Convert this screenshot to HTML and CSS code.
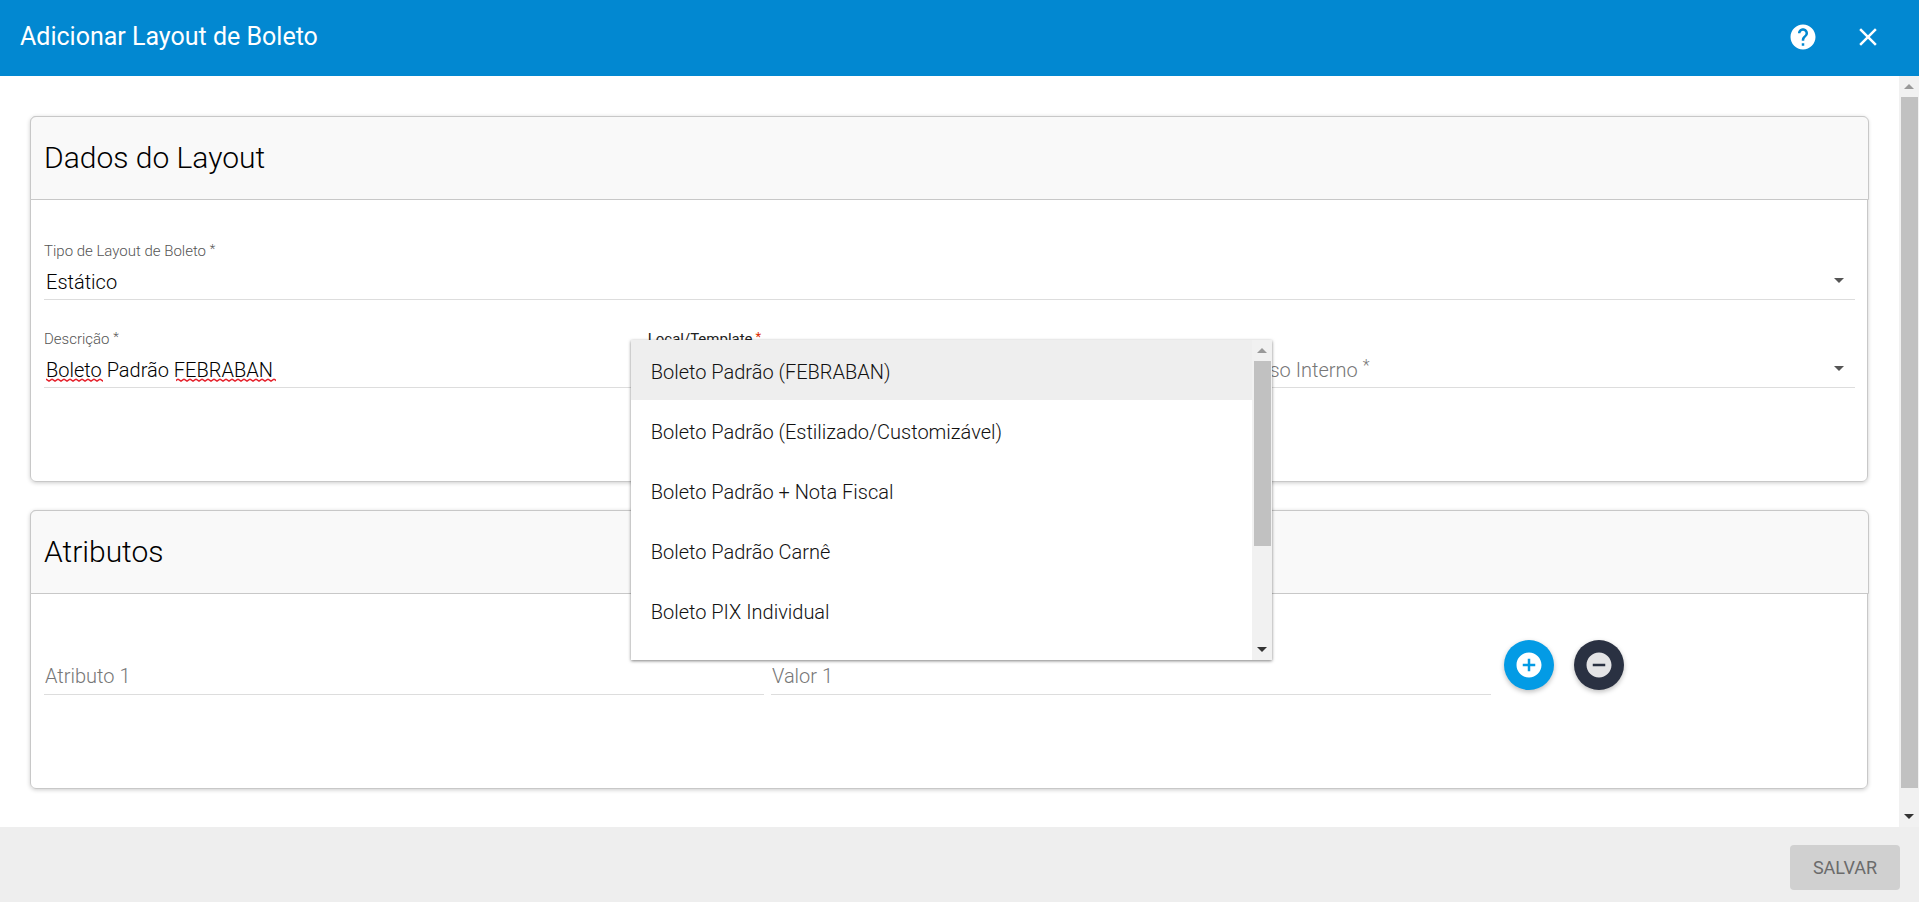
FILE: index.html
```html
<!DOCTYPE html>
<html lang="pt-BR">
<head>
<meta charset="utf-8">
<title>Adicionar Layout de Boleto</title>
<meta name="viewport" content="width=device-width, initial-scale=1">
<link rel="stylesheet" href="styles.css">
</head>
<body>
<form class="dialog">
  <header class="toolbar">
    <h1 class="toolbar-title">Adicionar Layout de Boleto</h1>
    <button class="icon-button" type="button" aria-label="Ajuda">
      <svg class="icon" viewBox="0 0 24 24"><path d="M12 2C6.48 2 2 6.48 2 12s4.480 10 10 10 10-4.480 10-10S17.520 2 12 2zm1 17h-2v-2h2v2zm2.070-7.750l-.9.920C13.450 12.900 13 13.500 13 15h-2v-.5c0-1.100.45-2.100 1.170-2.830l1.240-1.260c.37-.36.59-.86.59-1.410 0-1.100-.9-2-2-2s-2 .9-2 2H8c0-2.210 1.790-4 4-4s4 1.790 4 4c0 .88-.36 1.680-.93 2.250z"/></svg>
    </button>
    <button class="icon-button" type="button" aria-label="Fechar">
      <svg class="icon" viewBox="0 0 24 24"><path d="M19 6.410L17.590 5 12 10.590 6.410 5 5 6.410 10.590 12 5 17.590 6.410 19 12 13.410 17.590 19 19 17.590 13.410 12z"/></svg>
    </button>
  </header>

  <div class="viewport">
    <main class="content">
      <section class="card">
        <h2 class="card-head">Dados do Layout</h2>
        <div class="card-body">
          <div class="field">
            <label class="field-label" for="tipo">Tipo de Layout de Boleto <span class="star">*</span></label>
            <select class="control" id="tipo"><option>Estático</option></select>
            <span class="caret"></span>
          </div>
          <div class="row">
            <div class="field">
              <label class="field-label" for="descricao">Descrição <span class="star">*</span></label>
              <input class="control" id="descricao" type="text" value="Boleto Padrão FEBRABAN">
              <svg class="spelling" aria-hidden="true">
                <defs><pattern id="wave" width="6" height="4" patternUnits="userSpaceOnUse"><path d="M0 1L3 3L6 1"/></pattern></defs>
                <rect width="57" height="4"/><rect x="130" width="100" height="4"/>
              </svg>
            </div>
            <div class="field">
              <label class="field-label focused" for="template">Local/Template<span class="star">*</span></label>
              <select class="control" id="template"><option></option></select>
              <div class="menu">
                <ul class="options" role="listbox" aria-label="Local/Template">
                  <li class="option selected" role="option" aria-selected="true">Boleto Padrão (FEBRABAN)</li>
                  <li class="option" role="option">Boleto Padrão (Estilizado/Customizável)</li>
                  <li class="option" role="option">Boleto Padrão + Nota Fiscal</li>
                  <li class="option" role="option">Boleto Padrão Carnê</li>
                  <li class="option" role="option">Boleto PIX Individual</li>
                </ul>
                <div class="scrollbar" aria-hidden="true">
                  <span class="arrow up"></span>
                  <span class="track"><span class="thumb short"></span></span>
                  <span class="arrow down"></span>
                </div>
              </div>
            </div>
            <div class="field">
              <label class="field-label empty" for="uso">Uso Interno <span class="star">*</span></label>
              <select class="control" id="uso"><option></option></select>
              <span class="caret"></span>
            </div>
          </div>
        </div>
      </section>

      <section class="card">
        <h2 class="card-head">Atributos</h2>
        <div class="card-body attributes">
          <input class="control" type="text" placeholder="Atributo 1" aria-label="Atributo 1">
          <input class="control" type="text" placeholder="Valor 1" aria-label="Valor 1">
          <div class="actions">
            <button class="fab" type="button" aria-label="Adicionar atributo">
              <svg class="icon" viewBox="0 0 24 24"><path d="M12 2C6.480 2 2 6.480 2 12s4.480 10 10 10 10-4.480 10-10S17.520 2 12 2zm5 11h-4v4h-2v-4H7v-2h4V7h2v4h4v2z"/></svg>
            </button>
            <button class="fab dark" type="button" aria-label="Remover atributo">
              <svg class="icon" viewBox="0 0 24 24"><path d="M12 2C6.480 2 2 6.480 2 12s4.480 10 10 10 10-4.480 10-10S17.520 2 12 2zm5 11H7v-2h10v2z"/></svg>
            </button>
          </div>
        </div>
      </section>
    </main>
    <div class="scrollbar" aria-hidden="true">
      <span class="arrow up"></span>
      <span class="track"><span class="thumb"></span></span>
      <span class="arrow down"></span>
    </div>
  </div>

  <footer class="footer">
    <button class="save" type="submit" disabled>SALVAR</button>
  </footer>
</form>
</body>
</html>
```
FILE: styles.css
```css
* {
  box-sizing: border-box;
}

body {
  margin: 0;
  font-family: Roboto, "Liberation Sans", sans-serif;
  font-size: 20px;
  color: #111;
}

.dialog {
  display: flex;
  flex-direction: column;
  min-height: 100vh;
}

.toolbar {
  display: flex;
  align-items: center;
  gap: 15px;
  height: 76px;
  padding: 0 26px 3px 20px;
  background: #0288d1;
  color: #fff;
}

.toolbar-title {
  flex: 1;
  margin: 0;
  font-size: 25px;
  font-weight: 450;
}

.icon-button {
  display: grid;
  place-items: center;
  width: 50px;
  height: 50px;
  padding: 0;
  border: 0;
  background: none;
  color: inherit;
}

.icon {
  width: 30px;
  height: 30px;
  fill: currentColor;
}

.viewport {
  flex: 1;
  display: flex;
}

.content {
  flex: 1;
  display: flex;
  flex-direction: column;
  gap: 28px;
  padding: 40px 31px 38px 30px;
}

.card {
  border: 1px solid #c8c8c8;
  border-radius: 6px;
  box-shadow: 0 1px 4px rgba(0, 0, 0, 0.2);
}

.card-head {
  margin: -1px -2px 0 -1px;
  padding: 0 13px 1px;
  border: 1px solid #c8c8c8;
  border-radius: 6px 6px 0 0;
  background: #f9f9f9;
  font-size: 30px;
  font-weight: 350;
  line-height: 81px;
  color: #000;
}

.card-body {
  display: flex;
  flex-direction: column;
  gap: 29px;
  padding: 41px 12px 93px 13px;
}

.row {
  display: grid;
  grid-template-columns: repeat(3, 1fr);
}

.field {
  position: relative;
  display: grid;
  grid-template-rows: 20px 39px;
}

.field-label {
  grid-area: 1 / 1;
  font-size: 15px;
  font-weight: 300;
  line-height: 20px;
  color: #555;
}

.field-label.focused {
  font-weight: 400;
  color: #222;
}

.field-label.empty {
  grid-area: 2 / 1;
  padding: 4px 5px 0;
  font-size: 20px;
  line-height: 34px;
  color: #777;
}

.star {
  font-size: 13px;
  vertical-align: top;
  line-height: 16px;
}

.empty .star {
  font-size: 16px;
  line-height: 26px;
}

.focused .star {
  margin-left: 3px;
  color: #dd2c00;
}

.control {
  grid-area: 2 / 1;
  appearance: none;
  width: 100%;
  height: 39px;
  padding: 4px 2px 0;
  border: 0;
  border-bottom: 1px solid #ddd;
  border-radius: 0;
  outline: 0;
  background: transparent;
  font: inherit;
  font-weight: 350;
  color: #000;
}

.control::placeholder {
  color: #777;
  font-weight: 300;
  opacity: 1;
}

.caret {
  grid-area: 2 / 1;
  place-self: center end;
  margin-right: 11px;
  border: 5px solid transparent;
  border-top-color: #555;
  border-bottom: 0;
  pointer-events: none;
}

.spelling {
  position: absolute;
  left: 2px;
  bottom: 6px;
  width: 230px;
  height: 4px;
}

.spelling rect {
  fill: url(#wave);
}

.spelling path {
  fill: none;
  stroke: #e5202a;
  stroke-width: 1.5;
}

.menu {
  position: absolute;
  z-index: 1;
  top: 11px;
  left: -17px;
  right: -21px;
  display: flex;
  height: 320px;
  background: #fff;
  box-shadow: 0 1px 3px rgba(0, 0, 0, 0.5);
}

.options {
  flex: 1;
  margin: 0;
  padding: 0;
  list-style: none;
}

.option {
  padding: 4px 20px 0;
  line-height: 56px;
  font-weight: 350;
  color: #111;
}

.option.selected {
  background: #eee;
}

.scrollbar {
  display: flex;
  flex-direction: column;
  align-items: center;
  width: 20px;
  background: #f1f1f1;
}

.track {
  flex: 1;
  width: 17px;
}

.thumb {
  display: block;
  height: calc(100% - 18px);
  background: #c1c1c1;
}

.thumb.short {
  height: 185px;
}

.arrow {
  display: grid;
  place-items: center;
  width: 20px;
  height: 21px;
}

.arrow::before {
  content: "";
  border: 5px solid transparent;
}

.up::before {
  border-top: 0;
  border-bottom-color: #999;
}

.down::before {
  border-bottom: 0;
  border-top-color: #333;
}

.attributes {
  display: grid;
  grid-template-columns: 720fr 720fr 357fr;
  gap: 7px;
  padding-top: 46px;
}

.attributes .control {
  grid-area: auto;
  margin-top: 16px;
  padding: 2px 1px 0;
}

.actions {
  display: flex;
  gap: 20px;
  padding-left: 6px;
}

.fab {
  display: grid;
  place-items: center;
  width: 50px;
  height: 50px;
  padding: 0;
  border: 0;
  border-radius: 50%;
  background: #039be5;
  color: #fff;
  box-shadow: 0 2px 5px rgba(0, 0, 0, 0.26);
}

.fab.dark {
  background: #2a3142;
  color: #e4e4e6;
}

.footer {
  display: flex;
  justify-content: flex-end;
  padding: 18px 19px 12px;
  background: #eee;
}

.save {
  width: 110px;
  height: 45px;
  padding: 0;
  border: 0;
  border-radius: 4px;
  background: #d0d0d0;
  font: inherit;
  font-size: 18px;
  color: #6b6b6b;
}
```
